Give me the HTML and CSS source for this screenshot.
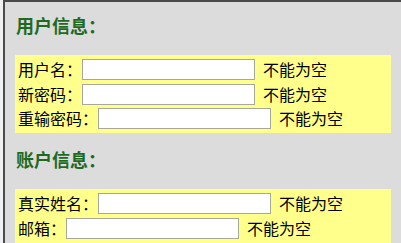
FILE: index.html
```html
<!DOCTYPE html>
<html lang="zh-CN">
<head>
<meta charset="utf-8">
<title>注册</title>
<link rel="stylesheet" href="styles.css">
</head>
<body>
<div class="panel">
  <div class="section">
    <h2 class="title">用户信息：</h2>
    <div class="box">
      <div class="row"><label class="label">用户名：</label><input class="field" type="text"><span class="hint">不能为空</span></div>
      <div class="row"><label class="label">新密码：</label><input class="field" type="password"><span class="hint">不能为空</span></div>
      <div class="row"><label class="label">重输密码：</label><input class="field" type="password"><span class="hint">不能为空</span></div>
    </div>
  </div>
  <div class="section">
    <h2 class="title">账户信息：</h2>
    <div class="box">
      <div class="row"><label class="label">真实姓名：</label><input class="field" type="text"><span class="hint">不能为空</span></div>
      <div class="row"><label class="label">邮箱：</label><input class="field" type="text"><span class="hint">不能为空</span></div>
    </div>
  </div>
</div>
</body>
</html>
```
FILE: styles.css
```css
html, body {
  margin: 0;
  padding: 0;
  background: #f0f0f0;
  font-family: "Noto Sans CJK SC", "Noto Sans", sans-serif;
  font-size: 16px;
  color: #000;
  height: 243px;
  overflow: hidden;
}
.panel {
  box-sizing: border-box;
  margin-left: 3px;
  border-top: 2px solid #4a4a4a;
  border-left: 2px solid #4a4a4a;
  background: #dcdcdc;
  padding: 13px 10px 0 10px;
  height: 243px;
  overflow: hidden;
}
.section + .section {
  margin-top: 16px;
}
.title {
  margin: 0 0 20px 1px;
  font-size: 18px;
  line-height: 20px;
  font-weight: bold;
  color: #1f6a1f;
}
.box {
  background: #ffff8c;
  padding: 4px 3px 4px 3px;
  display: flex;
  flex-direction: column;
  gap: 3.5px;
}
.row {
  display: flex;
  align-items: center;
  height: 21px;
  line-height: 21px;
}
.label {
  white-space: nowrap;
}
.field {
  box-sizing: border-box;
  width: 173px;
  height: 21px;
  margin: 0;
  padding: 0 2px;
  border: 1px solid #a8a89a;
  background: #fff;
  font-size: 13px;
}
.hint {
  margin-left: 8px;
  white-space: nowrap;
}
```
